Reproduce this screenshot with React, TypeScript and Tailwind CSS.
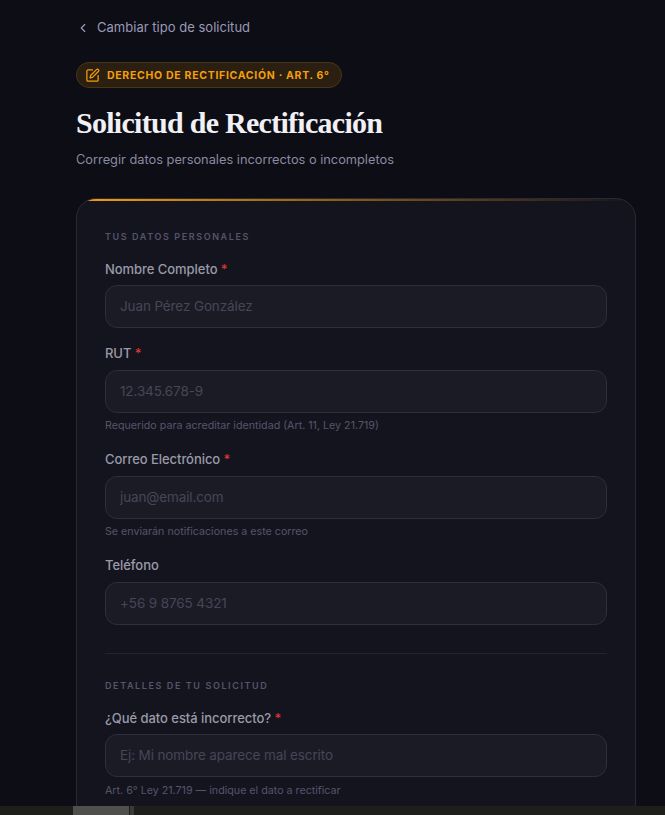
import React from "react";
import { ChevronLeft, SquarePen } from "lucide-react";

const sans = "font-['Inter','Noto_Sans',sans-serif]";

function Label({ text, req }: { text: string; req?: boolean }) {
  return (
    <div className="text-[13px] leading-[20px] font-medium tracking-[-0.05px] text-[#9a9aa8] h-[20px]">
      {text}
      {req && <span className="text-[#d93636]"> *</span>}
    </div>
  );
}

function Field({ label, req, placeholder, hint, cls }: { label: string; req?: boolean; placeholder: string; hint?: string; cls: string }) {
  return (
    <div className={cls}>
      <Label text={label} req={req} />
      <div className="mt-[6.5px] h-[43px] rounded-[12px] border border-[#2e2e3c] bg-[#1b1b26] px-[14px] flex items-center text-[13.5px] tracking-[-0.12px] text-[#464656]">
        {placeholder}
      </div>
      {hint && <div className="mt-[6.5px] h-[15px] text-[10.7px] leading-[14px] text-[#55556a]">{hint}</div>}
    </div>
  );
}

export default function App() {
  return (
    <div className={`h-[815px] w-[665px] overflow-hidden flex flex-col bg-[#0d0d15] ${sans}`}>
      <div className="flex-1 min-h-0 overflow-hidden pl-[76px] pr-[29px]">
        <div className="pt-[18px] flex items-center h-[38px] text-[13px] tracking-[0.02px] text-[#9a9ab8]">
          <ChevronLeft size={14} strokeWidth={2} className="mr-[7px]" />
          Cambiar tipo de solicitud
        </div>
        <div className="mt-[24px] flex w-fit items-center h-[26px] rounded-full border border-[#4a3516] bg-[#2a1f11] pl-[8px] pr-[11px] pt-px text-[#f59e0b] text-[10.5px] font-bold tracking-[0.7px]">
          <SquarePen size={15} strokeWidth={2} className="mr-[7px] mt-[-1px]" />
          DERECHO DE RECTIFICACIÓN · ART. 6°
        </div>
        <h1 className="mt-[16px] font-['Liberation_Serif',serif] font-bold text-[30px] leading-[38px] tracking-[-0.72px] text-[#f0f0f5]">
          Solicitud de Rectificación
        </h1>
        <p className="mt-[8px] text-[12.8px] leading-[20px] text-[#8a8aa0]">Corregir datos personales incorrectos o incompletos</p>
        <div className="relative mt-[28px] rounded-[20px] border border-[#2a2a36] bg-[#14141e] px-[28px] pt-[31px] pb-[40px] overflow-hidden">
          <div className="absolute left-0 right-0 top-0 h-[2px] bg-gradient-to-r from-[#f59e0b] to-transparent" />
          <div className="text-[9px] leading-[14px] font-semibold tracking-[1.6px] text-[#55556a]">TUS DATOS PERSONALES</div>
          <Field cls="mt-[14.5px]" label="Nombre Completo" req placeholder="Juan Pérez González" />
          <Field cls="mt-[15px]" label="RUT" req placeholder="12.345.678-9" hint="Requerido para acreditar identidad (Art. 11, Ley 21.719)" />
          <Field cls="mt-[15px]" label="Correo Electrónico" req placeholder="juan@email.com" hint="Se enviarán notificaciones a este correo" />
          <Field cls="mt-[15px]" label="Teléfono" placeholder="+56 9 8765 4321" />
          <div className="mt-[28.5px] h-px bg-[#24242f]" />
          <div className="mt-[25px] text-[9px] leading-[14px] font-semibold tracking-[1.6px] text-[#55556a]">DETALLES DE TU SOLICITUD</div>
          <Field cls="mt-[14.5px]" label="¿Qué dato está incorrecto?" req placeholder="Ej: Mi nombre aparece mal escrito" hint="Art. 6° Ley 21.719 — indique el dato a rectificar" />
        </div>
      </div>
      <div className="h-[9px] shrink-0 bg-[#1e1e1a] flex">
        <div className="ml-[73px] w-[56px] bg-[#4f4f4d]" />
        <div className="ml-[1px] w-[4px] bg-[#3a3a38]" />
      </div>
    </div>
  );
}
